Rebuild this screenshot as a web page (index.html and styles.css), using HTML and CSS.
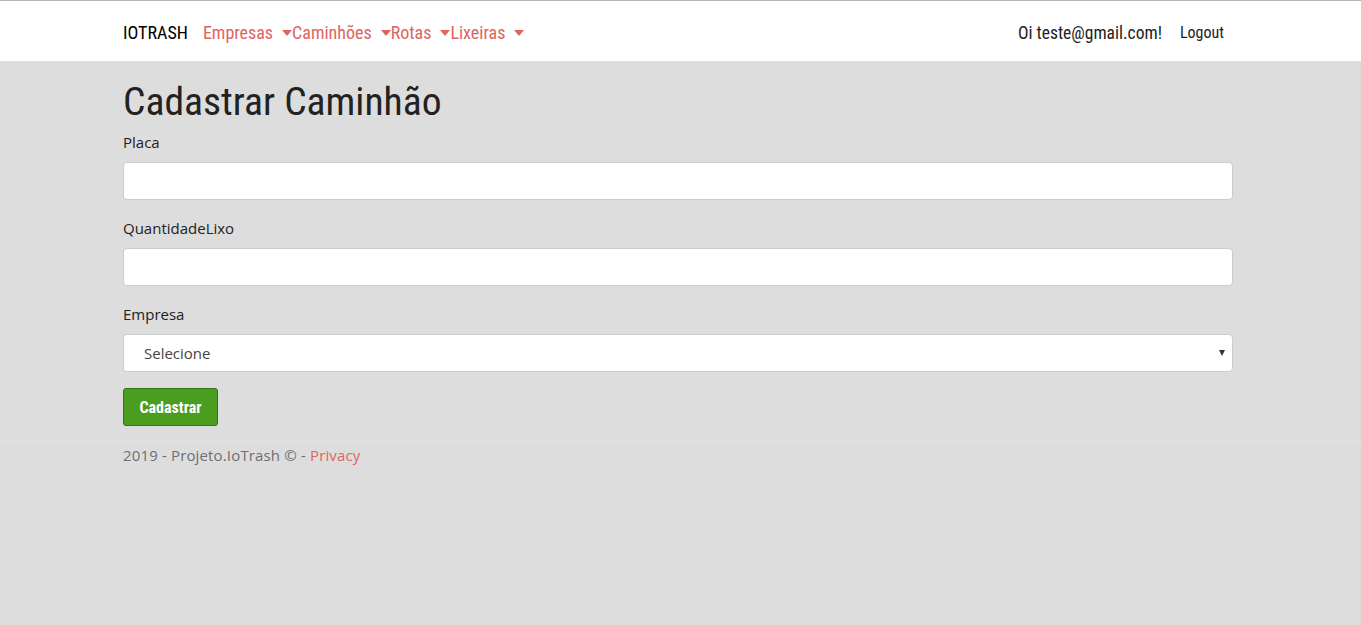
FILE: index.html
```html
<!DOCTYPE html>
<html lang="pt">
<head>
<meta charset="utf-8">
<title>Cadastrar Caminhão - IoTrash</title>
<link rel="stylesheet" href="styles.css">
</head>
<body>
<header class="topbar">
  <nav class="navbar">
    <div class="nav-left">
      <a class="brand" href="#">IOTRASH</a>
      <ul class="menu">
        <li><a class="menu-link" href="#">Empresas <span class="caret"></span></a></li>
        <li><a class="menu-link" href="#">Caminhões <span class="caret"></span></a></li>
        <li><a class="menu-link" href="#">Rotas <span class="caret"></span></a></li>
        <li><a class="menu-link" href="#">Lixeiras <span class="caret"></span></a></li>
      </ul>
    </div>
    <div class="nav-right">
      <span class="greet">Oi teste@gmail.com!</span>
      <a class="logout" href="#">Logout</a>
    </div>
  </nav>
</header>
<main class="content">
  <h1 class="title">Cadastrar Caminhão</h1>
  <form class="form">
    <div class="field">
      <label class="label" for="placa">Placa</label>
      <input class="input" id="placa" type="text">
    </div>
    <div class="field">
      <label class="label" for="qtd">QuantidadeLixo</label>
      <input class="input" id="qtd" type="text">
    </div>
    <div class="field">
      <label class="label" for="empresa">Empresa</label>
      <div class="select-wrap">
        <select class="select" id="empresa">
          <option>Selecione</option>
        </select>
      </div>
    </div>
    <button class="btn" type="button">Cadastrar</button>
  </form>
</main>
<footer class="footer">
  <div class="footer-inner">2019 - Projeto.IoTrash © - <a class="footer-link" href="#">Privacy</a></div>
</footer>
</body>
</html>
```
FILE: styles.css
```css
html, body {
  margin: 0;
  padding: 0;
}
body {
  background: #dddddd;
  font-family: "Open Sans", "Liberation Sans", sans-serif;
  font-size: 15px;
  color: #222;
  min-height: 625px;
}
.topbar {
  background: #fff;
  border-top: 1px solid #b4b4b4;
  height: 60px;
}
.navbar {
  box-sizing: border-box;
  width: 1110px;
  margin-left: 123px;
  height: 60px;
  padding-top: 3px;
  display: flex;
  align-items: center;
  justify-content: space-between;
  font-family: "Roboto Condensed", "Liberation Sans Narrow", "DejaVu Sans Condensed", sans-serif;
  font-size: 18px;
}
.nav-left {
  display: flex;
  align-items: center;
}
.brand {
  color: #000;
  text-decoration: none;
  margin-right: 15px;
}
.menu {
  list-style: none;
  display: flex;
  margin: 0;
  padding: 0;
}
.menu-link {
  color: #e0645e;
  text-decoration: none;
  display: flex;
  align-items: center;
}
.caret {
  display: inline-block;
  width: 0;
  height: 0;
  margin-left: 9px;
  border-top: 6px solid #e0645e;
  border-left: 5px solid transparent;
  border-right: 5px solid transparent;
}
.nav-right {
  display: flex;
  align-items: center;
  gap: 18px;
  padding-right: 9px;
}
.greet {
  color: #222;
  font-size: 17.5px;
}
.logout {
  color: #222;
  text-decoration: none;
  font-size: 16px;
}
.content {
  width: 1110px;
  margin-left: 123px;
  padding-top: 19px;
  padding-bottom: 15px;
}
.title {
  margin: 0 0 6px;
  font-family: "Roboto Condensed", "Liberation Sans Narrow", "DejaVu Sans Condensed", sans-serif;
  font-weight: 400;
  font-size: 39.6px;
  line-height: 44px;
  color: #222;
}
.field {
  display: flex;
  flex-direction: column;
  margin-bottom: 16px;
}
.label {
  line-height: 24px;
  margin-bottom: 8px;
  color: #222;
}
.input, .select {
  box-sizing: border-box;
  height: 38px;
  width: 100%;
  border: 1px solid #ccc;
  border-radius: 4px;
  background: #fff;
  font-family: inherit;
  font-size: 15px;
  color: #444;
  padding: 0 20px;
}
.select-wrap {
  position: relative;
}
.select {
  appearance: none;
  -webkit-appearance: none;
}
.select-wrap::after {
  content: "";
  position: absolute;
  right: 8px;
  top: 16px;
  border-top: 6px solid #333;
  border-left: 3px solid transparent;
  border-right: 3px solid transparent;
}
.btn {
  height: 38px;
  width: 95px;
  border: 1px solid #2f7512;
  border-radius: 3px;
  background: #4b9d1f;
  color: #fff;
  font-family: "Roboto Condensed", "Liberation Sans Narrow", "DejaVu Sans Condensed", sans-serif;
  font-weight: 700;
  font-size: 16px;
}
.footer {
  border-top: 1px solid #e4e4e4;
}
.footer-inner {
  width: 1110px;
  margin-left: 123px;
  padding-top: 1px;
  line-height: 24px;
  letter-spacing: 0.15px;
  color: #6f6f6f;
}
.footer-link {
  color: #e0645e;
  text-decoration: none;
}
```
